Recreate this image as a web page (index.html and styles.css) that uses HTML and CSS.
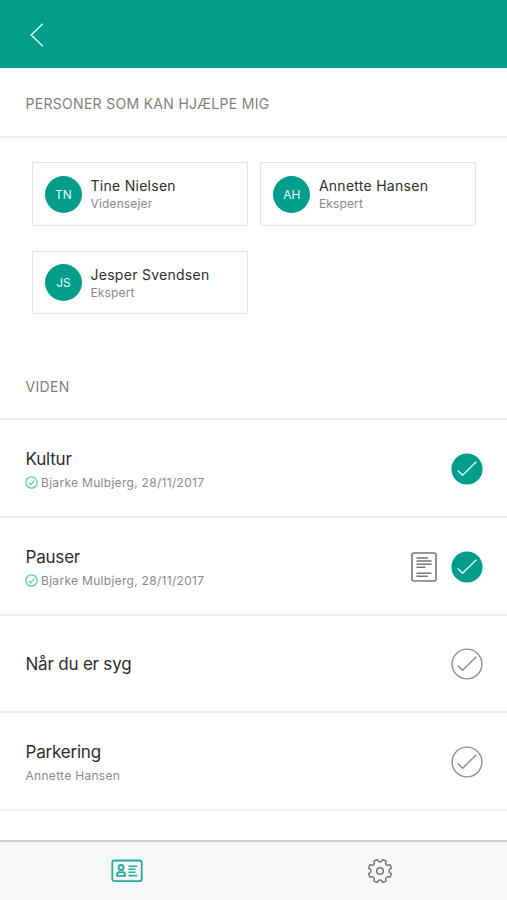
FILE: index.html
```html
<!DOCTYPE html>
<html lang="da">
<head>
<meta charset="utf-8">
<title>Viden</title>
<link rel="stylesheet" href="styles.css">
</head>
<body>
<svg class="defs" width="0" height="0" aria-hidden="true">
  <symbol id="check" viewBox="0 0 32 32"><circle cx="16" cy="16" r="14.9"/><path d="M6.8 17.5 L11.6 22.2 L25.3 8.8"/></symbol>
</svg>
<div class="app">
  <header class="topbar">
    <svg class="back" width="14" height="24" viewBox="0 0 14 24"><path d="M12.8 .8 L1.2 12 L12.8 23.2"/></svg>
  </header>
  <main class="content">
    <h2 class="section-title people-title">PERSONER SOM KAN HJÆLPE MIG</h2>
    <div class="people">
      <div class="person"><span class="avatar">TN</span><div><div class="name">Tine Nielsen</div><div class="role">Vidensejer</div></div></div>
      <div class="person"><span class="avatar">AH</span><div><div class="name">Annette Hansen</div><div class="role">Ekspert</div></div></div>
      <div class="person"><span class="avatar">JS</span><div><div class="name">Jesper Svendsen</div><div class="role">Ekspert</div></div></div>
    </div>
    <h2 class="section-title viden-title">VIDEN</h2>
    <div class="rows">
      <div class="row">
        <div class="info"><div class="title">Kultur</div><div class="meta"><svg class="mini" width="13" height="13" viewBox="0 0 13 13"><circle cx="6.5" cy="6.5" r="5.7"/><path d="M3.7 7 L5.6 8.7 L9.4 4.7"/></svg>Bjarke Mulbjerg, 28/11/2017</div></div>
        <svg class="status done" width="32" height="32"><use href="#check"/></svg>
      </div>
      <div class="row">
        <div class="info"><div class="title">Pauser</div><div class="meta"><svg class="mini" width="13" height="13" viewBox="0 0 13 13"><circle cx="6.5" cy="6.5" r="5.7"/><path d="M3.7 7 L5.6 8.7 L9.4 4.7"/></svg>Bjarke Mulbjerg, 28/11/2017</div></div>
        <svg class="doc" width="26" height="30" viewBox="0 0 26 30"><rect x="1" y="1" width="24" height="28" rx="2"/><path d="M5.5 6H17M5.5 9H20.5M5.5 12.2H20.5M5.5 15.3H14.5M5.5 21.2H20.5M5.5 24.3H17"/></svg>
        <svg class="status done" width="32" height="32"><use href="#check"/></svg>
      </div>
      <div class="row">
        <div class="info"><div class="title">Når du er syg</div></div>
        <svg class="status" width="32" height="32"><use href="#check"/></svg>
      </div>
      <div class="row">
        <div class="info"><div class="title">Parkering</div><div class="meta">Annette Hansen</div></div>
        <svg class="status" width="32" height="32"><use href="#check"/></svg>
      </div>
    </div>
  </main>
  <nav class="tabs">
    <a class="tab active"><svg width="32" height="24" viewBox="0 0 32 24"><rect x="1.3" y="1.5" width="29.4" height="20.6" rx="2.2"/><circle cx="10.1" cy="8.5" r="2.5"/><path d="M6 16.9 Q6 13.5 8.4 13 Q10.1 13.8 11.8 13 Q14.2 13.5 14.2 16.9 Z"/><path class="lines" d="M17.5 7.3H26.3M17.5 10.3H24.5M17.5 13.3H24.5M17.5 16.6H26.3"/></svg></a>
    <a class="tab"><svg width="26" height="26" viewBox="-13 -13 26 26">
      <defs><path id="tooth" d="M0 -9C1.6 -9 1.9 -9.8 2.2 -10.8Q2.5 -11.5 3.3 -11.2L5.59 -10.25Q6.36 -9.9 6.08 -9.19C5.59 -8.27 5.23 -7.49 6.36 -6.36"/></defs>
      <use href="#tooth"/><use href="#tooth" transform="rotate(45)"/><use href="#tooth" transform="rotate(90)"/><use href="#tooth" transform="rotate(135)"/><use href="#tooth" transform="rotate(180)"/><use href="#tooth" transform="rotate(225)"/><use href="#tooth" transform="rotate(270)"/><use href="#tooth" transform="rotate(315)"/>
      <circle r="3.3"/></svg></a>
  </nav>
</div>
</body>
</html>
```
FILE: styles.css
```css
* { box-sizing: border-box; }
body { margin: 0; background: #fff; font-family: Inter, "Liberation Sans", sans-serif; color: #2e2e2e; }
svg { fill: none; display: block; }
.app { height: 900px; display: flex; flex-direction: column; overflow: hidden; }
.topbar { height: 68px; flex: none; background: #009d8b; padding: 23px 0 0 30px; }
.back path { stroke: #e3fffb; stroke-width: 1.4; }
.content { flex: 1; min-height: 0; overflow: hidden; }
.section-title { margin: 0; padding-left: 25.5px; font-size: 14px; font-weight: 400; color: #808080; letter-spacing: .3px; border-bottom: 2px solid #efefef; display: flex; align-items: center; }
.people-title { height: 70px; padding-top: 3px; }
.viden-title { height: 68px; padding-top: 3px; }
.people { display: grid; grid-template-columns: 216px 216px; gap: 25px 12.4px; padding: 24px 0 38px 32px; }
.person { height: 63.5px; border: 1px solid #e4e4e4; display: flex; align-items: center; padding: 1px 0 0 12px; gap: 8.5px; }
.avatar { width: 37px; height: 37px; border-radius: 50%; background: #009d8b; color: #e6fffb; font-size: 12px; display: flex; align-items: center; justify-content: center; }
.name { font-size: 14px; line-height: 19px; letter-spacing: .27px; }
.role { font-size: 12px; line-height: 16px; letter-spacing: .15px; margin-top: 1px; color: #8a8a8a; }
.row { height: 97.75px; border-bottom: 2px solid #efefef; display: flex; align-items: center; padding: 2px 24px 0 25.5px; }
.info { flex: 1; }
.title { font-size: 17px; line-height: 24px; letter-spacing: -.2px; }
.meta { font-size: 12px; line-height: 16px; margin-top: 4px; letter-spacing: .3px; color: #8a8a8a; display: flex; align-items: center; }
.mini { margin: -1px 3px 0 -.5px; stroke: #57c9af; stroke-width: 1.2; }
.doc { margin-right: 14px; stroke: #777; stroke-width: 1.6; }
.status { flex: none; stroke: #8b8b8b; stroke-width: 1.4; }
.done { --ring: #009d8b; fill: #009d8b; stroke: #dcfff9; }
#check circle { stroke: var(--ring, #909090); }
#check path { fill: none; }
.tabs { flex: none; height: 60.5px; background: #f6f7f7; border-top: 2px solid #cdcdcd; display: flex; }
.tab { flex: 1; display: flex; align-items: center; justify-content: center; stroke: #777; stroke-width: 1.5; }
.active { stroke: #27ab99; stroke-width: 1.8; }
.lines { stroke-width: 1.6; }
```
